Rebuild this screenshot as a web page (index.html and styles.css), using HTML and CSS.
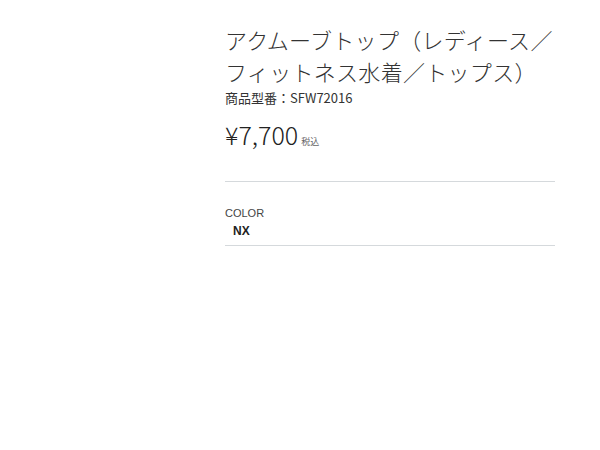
FILE: index.html
```html
<!DOCTYPE html>
<html lang="ja">
<head>
<meta charset="utf-8">
<link rel="stylesheet" href="styles.css">
</head>
<body>
<div class="product">
  <h1 class="title">アクムーブトップ（レディース／フィットネス水着／トップス）</h1>
  <p class="model">商品型番：SFW72016</p>
  <p class="price"><span class="amount">¥7,700</span><span class="tax">税込</span></p>
  <div class="option">
    <div class="label">COLOR</div>
    <div class="value">NX</div>
  </div>
</div>
</body>
</html>
```
FILE: styles.css
```css
html, body {
  margin: 0;
  padding: 0;
  background: #fff;
}
body {
  font-family: "Noto Sans CJK JP", "Noto Sans", sans-serif;
  color: #222;
}
.product {
  width: 330px;
  margin-left: 225px;
  padding-top: 23px;
}
.title {
  margin: 0;
  font-size: 22px;
  line-height: 32px;
  font-weight: 300;
  color: #333;
  letter-spacing: 0.3px;
}
.model {
  margin: 2px 0 0;
  font-size: 13px;
  line-height: 18px;
  color: #333;
}
.price {
  margin: 9px 0 0;
  line-height: 36px;
  padding-bottom: 21px;
  border-bottom: 1px solid #d5d9dc;
}
.amount {
  font-size: 25px;
  font-weight: 300;
  color: #222;
}
.tax {
  font-size: 9px;
  color: #666;
  margin-left: 3px;
}
.option {
  padding-top: 24px;
  padding-bottom: 6px;
  border-bottom: 1px solid #d5d9dc;
}
.label {
  font-family: "Liberation Sans", Arial, sans-serif;
  font-size: 11px;
  line-height: 14px;
  color: #444;
}
.value {
  font-family: "Liberation Sans", Arial, sans-serif;
  font-size: 12px;
  font-weight: bold;
  line-height: 16px;
  color: #222;
  padding-left: 8px;
  margin-top: 3px;
}
```
